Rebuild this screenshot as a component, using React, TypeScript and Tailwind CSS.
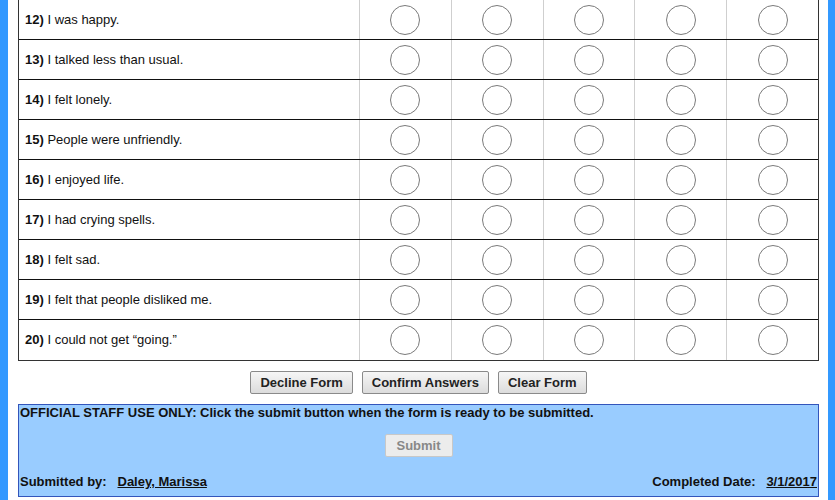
import React from 'react';

type Item = {
	num: number;
	text: string;
};

const items: Item[] = [
	{ num: 12, text: 'I was happy.' },
	{ num: 13, text: 'I talked less than usual.' },
	{ num: 14, text: 'I felt lonely.' },
	{ num: 15, text: 'People were unfriendly.' },
	{ num: 16, text: 'I enjoyed life.' },
	{ num: 17, text: 'I had crying spells.' },
	{ num: 18, text: 'I felt sad.' },
	{ num: 19, text: 'I felt that people disliked me.' },
	{ num: 20, text: 'I could not get \u201cgoing.\u201d' },
];

function GrayButton({ label }: { label: string }) {
	return (
		<button className="h-[23px] px-[9px] border border-[#8a8a8a] rounded-[2px] bg-gradient-to-b from-[#f6f6f6] to-[#dcdcdc] text-[13px] font-bold text-[#222] leading-none">
			{label}
		</button>
	);
}

export default function App() {
	const [answers, setAnswers] = React.useState<{ [key: number]: number }>({});

	return (
		<div className="flex w-[835px] h-[500px] overflow-hidden bg-white font-['Liberation_Sans',Arial,sans-serif] text-[13px] text-[#111]">
			<div className="w-[8px] shrink-0 bg-[#3399ff]" />
			<div className="flex-1 flex flex-col pl-[10px] pr-[9px]">
				<div className="-mt-px border border-[#333]">
					{items.map((item, idx) => (
						<div
							key={item.num}
							className={`flex h-[40px] ${idx < items.length - 1 ? 'border-b border-[#111]' : ''}`}
						>
							<div className="w-[341px] shrink-0 flex items-center pl-[6px] border-r border-[#cfcfcf]">
								<span className="font-bold">{item.num})</span>
								<span>&nbsp;{item.text}</span>
							</div>
							{[0, 1, 2, 3, 4].map((c) => (
								<div
									key={c}
									onClick={() => setAnswers((prev) => ({ ...prev, [item.num]: c }))}
									className={`flex-1 flex items-center justify-center cursor-pointer ${c < 4 ? 'border-r border-[#cfcfcf]' : ''}`}
								>
									<span className="flex items-center justify-center w-[30px] h-[30px] rounded-full border border-[#7a7a7a] bg-white">
										{answers[item.num] === c && <span className="w-[12px] h-[12px] rounded-full bg-[#333]" />}
									</span>
								</div>
							))}
						</div>
					))}
				</div>
				<div className="flex justify-center gap-[9px] pt-[10px] pb-[10px]">
					<GrayButton label="Decline Form" />
					<GrayButton label="Confirm Answers" />
					<GrayButton label="Clear Form" />
				</div>
				<div className="h-[93px] border border-[#3355bb] bg-[#99ccff] flex flex-col px-px">
					<div className="font-bold leading-[15px]">
						OFFICIAL STAFF USE ONLY: Click the submit button when the form is ready to be submitted.
					</div>
					<div className="flex justify-center pt-[14px]">
						<button
							disabled
							className="w-[68px] h-[23px] border border-[#c8c8c8] rounded-[2px] bg-[#ececec] text-[13px] font-bold text-[#888] leading-none"
						>
							Submit
						</button>
					</div>
					<div className="mt-auto flex justify-between items-end pb-[7px] font-bold leading-[15px]">
						<div>
							Submitted by:&nbsp;&nbsp;&nbsp;<span className="underline">Daley, Marissa</span>
						</div>
						<div>
							Completed Date:&nbsp;&nbsp;&nbsp;<span className="underline">3/1/2017</span>
						</div>
					</div>
				</div>
			</div>
			<div className="w-[7px] shrink-0 bg-[#3399ff]" />
		</div>
	);
}
